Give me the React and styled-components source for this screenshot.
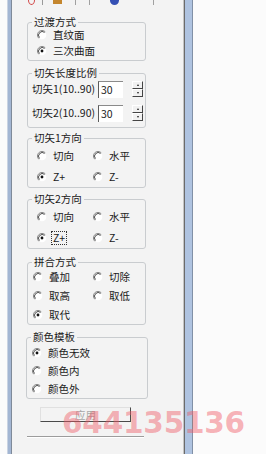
import styled, { createGlobalStyle } from "styled-components";

const Global = createGlobalStyle`
  html, body {
    margin: 0;
    padding: 0;
    background: #fbfbfb;
  }
  body {
    font-family: "Noto Sans CJK SC", "Noto Sans", sans-serif;
  }
`;

const Screen = styled.div`
  position: relative;
  width: 266px;
  height: 454px;
  overflow: hidden;
  background: #fbfbfb;
`;

const Window = styled.div`
  margin-left: 8px;
  width: 184px;
  height: 454px;
  box-sizing: border-box;
  display: flex;
  border-left: 3px solid #a3b6d3;
  border-right: 7px solid #afc3e0;
  box-shadow: 1px 0 0 #8190a6, -1px 0 0 #c9d3e2;
`;

const Panel = styled.div`
  flex: 1;
  background: #f3f3f3;
  border-left: 1px solid #7f8a99;
  border-right: 1px solid #6b6b6b;
  box-shadow: inset -1px 0 0 #c4c4c4;
  display: flex;
  flex-direction: column;
`;

const TabStrip = styled.div`
  height: 6px;
  display: flex;
  align-items: flex-start;
  overflow: hidden;
`;

const TabIcon = styled.span`
  flex: none;
  margin-left: ${(p) => p.$ml}px;
  width: ${(p) => p.$w}px;
  height: ${(p) => p.$h}px;
  background: ${(p) => p.$bg || "transparent"};
  border: ${(p) => p.$border || "none"};
  border-radius: ${(p) => p.$r || 0};
  margin-top: ${(p) => p.$mt || 0}px;
  box-sizing: border-box;
`;

const Content = styled.div`
  padding: 16px 0 0 15px;
  display: flex;
  flex-direction: column;
  align-items: flex-start;
`;

const Group = styled.div`
  margin-top: ${(p) => p.$mt}px;
  margin-left: ${(p) => p.$ml || 0}px;
  width: ${(p) => p.$w}px;
  box-sizing: border-box;
  border: 1px solid #c9cccf;
  border-radius: 3px;
  padding-bottom: ${(p) => p.$pb || 0}px;
  display: flex;
  flex-direction: column;
`;

const Legend = styled.span`
  align-self: flex-start;
  margin: -6px 0 0 4px;
  padding: 0 2px;
  background: #f3f3f3;
  font-size: 10.5px;
  line-height: 10px;
  color: #1a1a1a;
  white-space: nowrap;
`;

const Grid = styled.div`
  display: grid;
  grid-template-columns: ${(p) => p.$cols};
  grid-auto-rows: ${(p) => p.$rh}px;
  row-gap: ${(p) => p.$rg || 0}px;
  padding: ${(p) => p.$pt || 0}px 0 0 ${(p) => p.$pl}px;
`;

const Option = styled.label`
  display: flex;
  align-items: center;
  gap: 5px;
  font-size: 10.5px;
  line-height: 12px;
  color: #1a1a1a;
  white-space: nowrap;
`;

const OptText = styled.span`
  padding: 0 1px;
  outline: ${(p) => (p.$focus ? "1px dotted #333" : "none")};
`;

const SpinRow = styled.div`
  display: flex;
  align-items: center;
  height: 18px;
  padding-left: 4px;
  margin-top: ${(p) => p.$mt}px;
`;

const SpinLabel = styled.span`
  width: 66px;
  font-size: 10.5px;
  line-height: 12px;
  color: #1a1a1a;
  white-space: nowrap;
`;

const NumBox = styled.div`
  width: 25px;
  height: 17px;
  box-sizing: border-box;
  background: #fff;
  border-left: 1px solid #5c5c5c;
  border-top: 1px solid #8a8a8a;
  padding: 1px 0 0 2px;
  font-size: 10.5px;
  line-height: 14px;
  color: #1a1a1a;
`;

const Spin = styled.div`
  margin-left: 9px;
  display: flex;
  flex-direction: column;
`;

const SpinHalf = styled.div`
  width: 11px;
  height: 8px;
  box-sizing: border-box;
  background: #f1f1f1;
  border-top: 1px solid #fff;
  border-left: 1px solid #fff;
  border-right: 1px solid #444;
  border-bottom: 1px solid #444;
  display: flex;
  align-items: center;
  justify-content: center;
`;

const Arrow = styled.span`
  width: 0;
  height: 0;
  border-left: 1.5px solid transparent;
  border-right: 1.5px solid transparent;
  ${(p) =>
    p.$up ? "border-bottom: 2px solid #222;" : "border-top: 2px solid #222;"}
`;

const ApplyButton = styled.button`
  margin: 8px 0 0 13px;
  width: 91px;
  height: 15px;
  padding: 0;
  box-sizing: border-box;
  background: #f3f3f3;
  border-top: 1px solid #e0e0e0;
  border-left: 1px solid #e0e0e0;
  border-right: 1px solid #4a4a4a;
  border-bottom: 1px solid #4a4a4a;
  font-family: inherit;
  font-size: 10.5px;
  line-height: 12px;
  color: #a8a8a8;
`;

const Separator = styled.div`
  margin-top: 14px;
  width: 117px;
  border-top: 1px solid #9c9c9c;
  border-bottom: 1px solid #ffffff;
`;

const Watermark = styled.div`
  position: absolute;
  left: 62px;
  top: 408px;
  font-family: "DejaVu Sans", sans-serif;
  font-weight: bold;
  font-size: 29.5px;
  line-height: 30px;
  letter-spacing: -0.2px;
  color: rgba(240, 88, 100, 0.45);
  white-space: nowrap;
  pointer-events: none;
`;

const Radio = ({ checked }) => (
  <svg width="10" height="10" viewBox="0 0 12 12">
    <circle cx="6" cy="6" r="5.2" fill="#fff" />
    <path
      d="M9.9 2.1 A5.5 5.5 0 0 0 2.1 9.9"
      stroke="#8c8c8c"
      strokeWidth="1.2"
      fill="none"
    />
    <path
      d="M9.1 2.9 A4.4 4.4 0 0 0 2.9 9.1"
      stroke="#3a3a3a"
      strokeWidth="1.1"
      fill="none"
    />
    {checked && <circle cx="6" cy="6" r="1.7" fill="#111" />}
  </svg>
);

const Opt = ({ checked, focus, children }) => (
  <Option>
    <Radio checked={checked} />
    <OptText $focus={focus}>{children}</OptText>
  </Option>
);

const SpinField = ({ label, value, mt }) => (
  <SpinRow $mt={mt}>
    <SpinLabel>{label}</SpinLabel>
    <NumBox>{value}</NumBox>
    <Spin>
      <SpinHalf>
        <Arrow $up />
      </SpinHalf>
      <SpinHalf>
        <Arrow />
      </SpinHalf>
    </Spin>
  </SpinRow>
);

export default function App() {
  return (
    <Screen>
      <Global />
      <Window>
        <Panel>
          <TabStrip>
            <TabIcon $ml={16} $w={7} $h={10} $mt={-5} $border="1.5px solid #d24848" $r="50%" />
            <TabIcon $ml={7} $w={1} $h={5} $bg="#9a9a9a" />
            <TabIcon $ml={10} $w={9} $h={4} $bg="#c4862e" />
            <TabIcon $ml={13} $w={1} $h={5} $bg="#a0a0a0" />
            <TabIcon $ml={13} $w={1} $h={5} $bg="#a0a0a0" />
            <TabIcon $ml={20} $w={9} $h={9} $mt={-4} $bg="#3550b4" $r="50%" />
            <TabIcon $ml={34} $w={1} $h={5} $bg="#a0a0a0" />
          </TabStrip>
          <Content>
            <Group $mt={0} $w={119} $pb={1}>
              <Legend>过渡方式</Legend>
              <Grid $cols="1fr" $rh={16} $pl={9}>
                <Opt>直纹面</Opt>
                <Opt checked>三次曲面</Opt>
              </Grid>
            </Group>

            <Group $mt={12} $w={119} $pb={5}>
              <Legend>切矢长度比例</Legend>
              <SpinField label="切矢1(10..90)" value="30" mt={2} />
              <SpinField label="切矢2(10..90)" value="30" mt={6} />
            </Group>

            <Group $mt={10} $w={119}>
              <Legend>切矢1方向</Legend>
              <Grid $cols="56px 1fr" $rh={20} $rg={1} $pt={3} $pl={9}>
                <Opt>切向</Opt>
                <Opt>水平</Opt>
                <Opt checked>Z+</Opt>
                <Opt>Z-</Opt>
              </Grid>
            </Group>

            <Group $mt={11} $w={119}>
              <Legend>切矢2方向</Legend>
              <Grid $cols="56px 1fr" $rh={20} $rg={1} $pt={3} $pl={9}>
                <Opt>切向</Opt>
                <Opt>水平</Opt>
                <Opt checked focus>Z+</Opt>
                <Opt>Z-</Opt>
              </Grid>
            </Group>

            <Group $mt={13} $w={119}>
              <Legend>拼合方式</Legend>
              <Grid $cols="60px 1fr" $rh={19} $pt={0} $pl={5}>
                <Opt>叠加</Opt>
                <Opt>切除</Opt>
                <Opt>取高</Opt>
                <Opt>取低</Opt>
                <Opt checked>取代</Opt>
              </Grid>
            </Group>

            <Group $mt={12} $ml={-1} $w={122}>
              <Legend>颜色模板</Legend>
              <Grid $cols="1fr" $rh={18} $pt={2} $pl={5}>
                <Opt checked>颜色无效</Opt>
                <Opt>颜色内</Opt>
                <Opt>颜色外</Opt>
              </Grid>
            </Group>

            <ApplyButton disabled>应用</ApplyButton>
            <Separator />
          </Content>
        </Panel>
      </Window>
      <Watermark>644135136</Watermark>
    </Screen>
  );
}
